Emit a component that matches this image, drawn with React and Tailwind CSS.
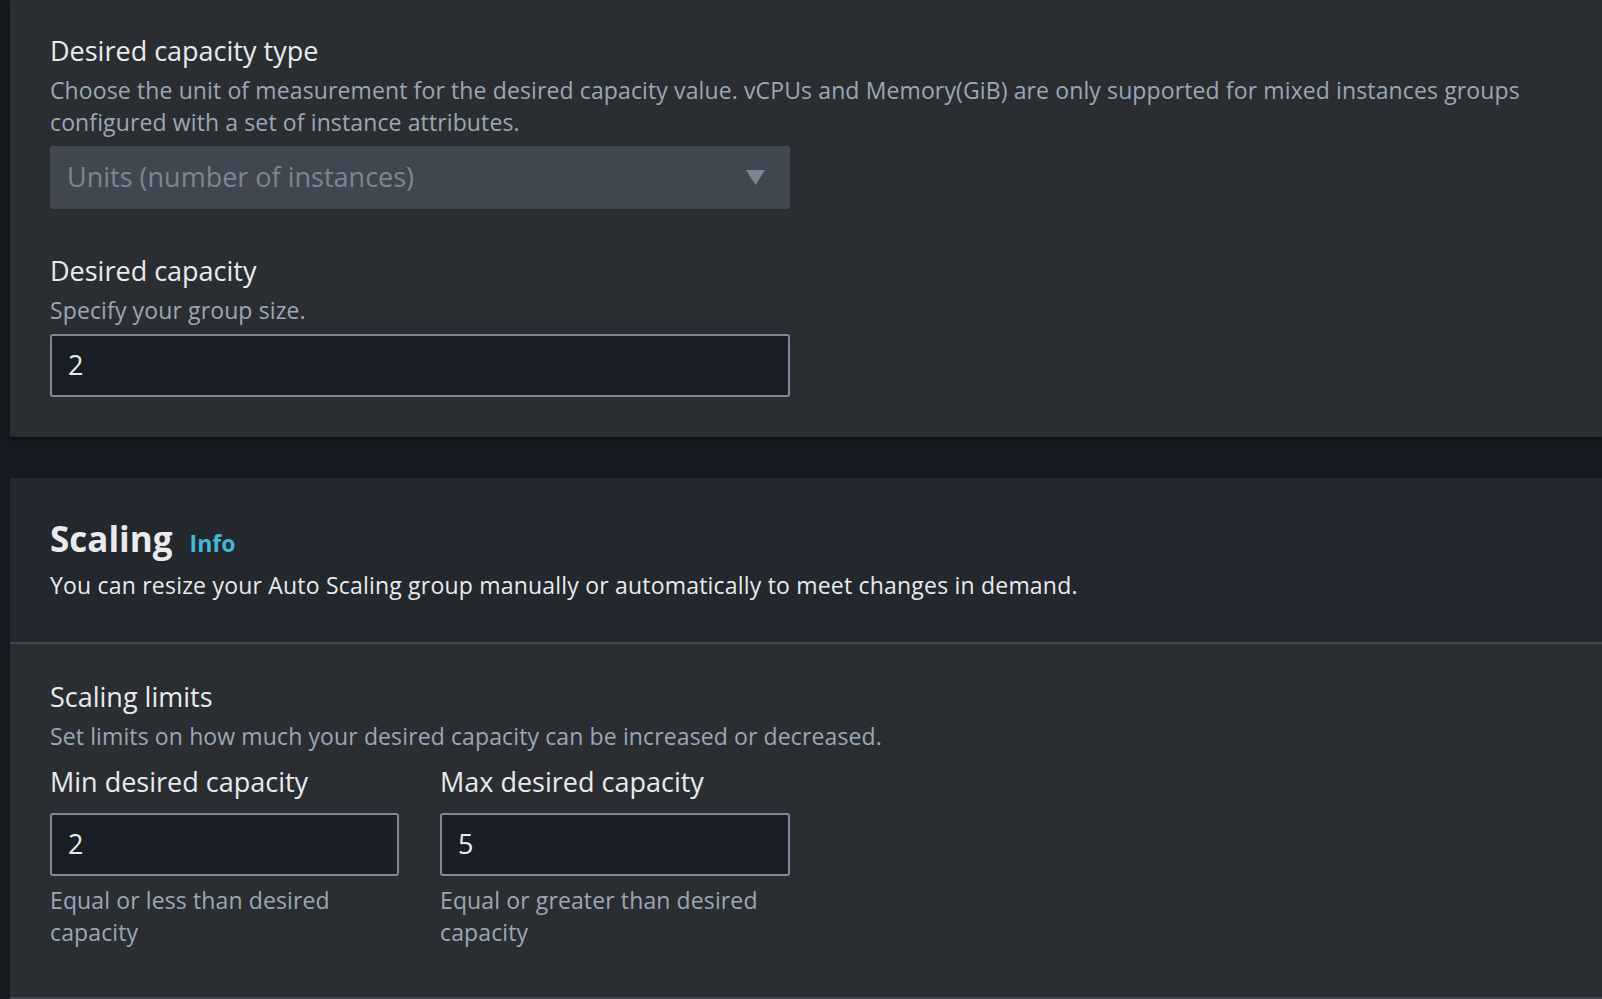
import React from 'react'

const font = "font-['Open_Sans',sans-serif]"

const Label = ({ children }) => (
  <div className="text-[27px] leading-[32px] font-medium text-[#e9ebed]">{children}</div>
)

const Desc = ({ children, className = "" }) => (
  <div className={`text-[23px] leading-[32px] tracking-[0.12px] text-[#9ba7b6] ${className}`}>{children}</div>
)

const TextInput = ({ value, className = "" }) => (
  <div className={`h-[63px] rounded-[3px] border-2 border-[#7d8998] bg-[#1a1f27] px-[16px] flex items-center text-[27px] text-[#e9ebed] ${className}`}>
    {value}
  </div>
)

const App = () => {
  return (
    <div className={`min-h-[999px] bg-[#161a20] pl-[10px] ${font}`}>
      {/* capacity card */}
      <div className="bg-[#2a2e33] px-[40px] pt-[35px] pb-[40px] shadow-[0_2px_3px_rgba(0,0,0,0.5)]">
        <Label>Desired capacity type</Label>
        <Desc className="mt-[7px]">
          <span className="block whitespace-nowrap">Choose the unit of measurement for the desired capacity value. vCPUs and Memory(GiB) are only supported for mixed instances groups</span>
          <span className="block">configured with a set of instance attributes.</span>
        </Desc>
        <div className="mt-[8px] w-[740px] h-[63px] rounded-[3px] bg-[#414750] pl-[17px] pr-[24px] flex items-center justify-between">
          <span className="text-[27px] text-[#7d8690]">Units (number of instances)</span>
          <svg width="21" height="17" viewBox="0 0 21 17">
            <path d="M1 1 H20 L10.5 16 Z" fill="#7d8690" />
          </svg>
        </div>

        <div className="mt-[46px]">
          <Label>Desired capacity</Label>
          <Desc className="mt-[7px]">Specify your group size.</Desc>
          <TextInput value="2" className="mt-[8px] w-[740px]" />
        </div>
      </div>

      {/* scaling card */}
      <div className="mt-[41px] bg-[#2a2e33] border-b-2 border-[#414750]">
        <div className="bg-[#23272e] px-[40px] pt-[41px] pb-[41px] border-b-2 border-[#414750]">
          <div className="flex h-[40px] items-baseline gap-[17px]">
            <h2 className="text-[35px] leading-[40px] font-bold text-[#e9ebed]">Scaling</h2>
            <a className="text-[23px] leading-[24px] font-bold text-[#44b9d6]">Info</a>
          </div>
          <p className="mt-[10px] text-[23px] leading-[32px] tracking-[0.2px] text-[#e9ebed]">
            You can resize your Auto Scaling group manually or automatically to meet changes in demand.
          </p>
        </div>

        <div className="px-[40px] pt-[37px] pb-[49px]">
          <Label>Scaling limits</Label>
          <Desc className="mt-[7px]">Set limits on how much your desired capacity can be increased or decreased.</Desc>
          <div className="mt-[14px] flex gap-[41px]">
            <div className="w-[349px]">
              <Label>Min desired capacity</Label>
              <TextInput value="2" className="mt-[15px]" />
              <Desc className="mt-[8px]">Equal or less than desired capacity</Desc>
            </div>
            <div className="w-[350px]">
              <Label>Max desired capacity</Label>
              <TextInput value="5" className="mt-[15px]" />
              <Desc className="mt-[8px]">Equal or greater than desired capacity</Desc>
            </div>
          </div>
        </div>
      </div>
    </div>
  )
}

export default App
